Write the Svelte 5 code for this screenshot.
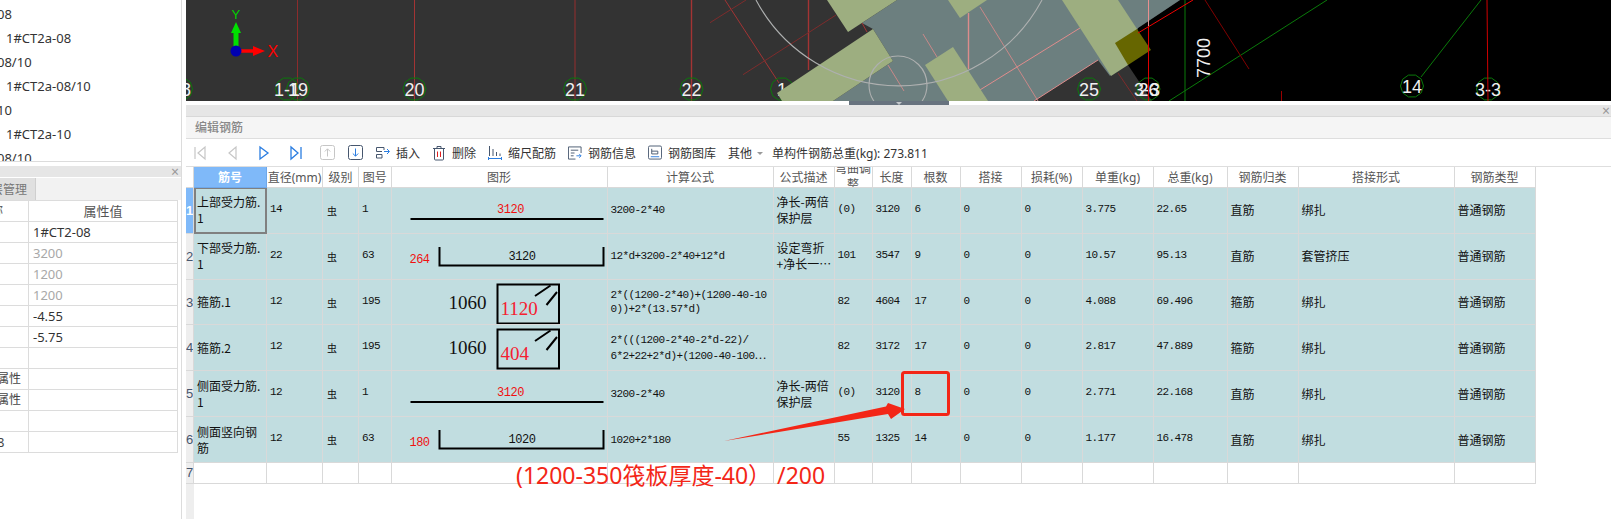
<script>
  const tree = [
    { t: '08', cls: 'lv0' },
    { t: '1#CT2a-08', cls: 'lv1' },
    { t: '08/10', cls: 'lv0' },
    { t: '1#CT2a-08/10', cls: 'lv1' },
    { t: '10', cls: 'lv0' },
    { t: '1#CT2a-10', cls: 'lv1' },
    { t: '08/10', cls: 'lv0' }
  ];

  const props = [
    ['', '1#CT2-08', ''],
    ['', '3200', 'grey'],
    ['', '1200', 'grey'],
    ['', '1200', 'grey'],
    ['', '-4.55', ''],
    ['', '-5.75', ''],
    ['', '', ''],
    ['属性', '', ''],
    ['属性', '', ''],
    ['', '', ''],
    ['8', '', '']
  ];

  const heads = ['筋号', '直径(mm)', '级别', '图号', '图形', '计算公式', '公式描述', '弯曲调整', '长度', '根数', '搭接', '损耗(%)', '单重(kg)', '总重(kg)', '钢筋归类', '搭接形式', '钢筋类型'];

  const rows = [
    { name: ['上部受力筋.', '1'], dia: 14, fig: 1, shape: 'line', a: '3120', formula: ['3200-2*40'], desc: ['净长-两倍', '保护层'], adj: '(0)', len: 3120, n: 6, unit: '3.775', total: '22.65', cat: '直筋', form: '绑扎' },
    { name: ['下部受力筋.', '1'], dia: 22, fig: 63, shape: 'hook', a: '264', b: '3120', formula: ['12*d+3200-2*40+12*d'], desc: ['设定弯折', '+净长一⋯'], adj: '101', len: 3547, n: 9, unit: '10.57', total: '95.13', cat: '直筋', form: '套管挤压' },
    { name: ['箍筋.1'], dia: 12, fig: 195, shape: 'stirrup', a: '1060', b: '1120', formula: ['2*((1200-2*40)+(1200-40-10', '0))+2*(13.57*d)'], desc: [], adj: '82', len: 4604, n: 17, unit: '4.088', total: '69.496', cat: '箍筋', form: '绑扎' },
    { name: ['箍筋.2'], dia: 12, fig: 195, shape: 'stirrup', a: '1060', b: '404', formula: ['2*(((1200-2*40-2*d-22)/', '6*2+22+2*d)+(1200-40-100⋯'], desc: [], adj: '82', len: 3172, n: 17, unit: '2.817', total: '47.889', cat: '箍筋', form: '绑扎' },
    { name: ['侧面受力筋.', '1'], dia: 12, fig: 1, shape: 'line', a: '3120', formula: ['3200-2*40'], desc: ['净长-两倍', '保护层'], adj: '(0)', len: 3120, n: 8, unit: '2.771', total: '22.168', cat: '直筋', form: '绑扎' },
    { name: ['侧面竖向钢', '筋'], dia: 12, fig: 63, shape: 'hook', a: '180', b: '1020', formula: ['1020+2*180'], desc: [], adj: '55', len: 1325, n: 14, unit: '1.177', total: '16.478', cat: '直筋', form: '绑扎' }
  ];

  // axis labels: text centre and the ring around it (ring may sit apart, some are hidden)
  const marks = [
    { t: '8', x: 186, y: 89, ring: 181 },
    { t: '1-1', x: 287, y: 89, ring: 287 },
    { t: '19', x: 298, y: 89, ring: 298 },
    { t: '20', x: 414.5, y: 89, ring: 414.5 },
    { t: '21', x: 575, y: 89, ring: 575 },
    { t: '22', x: 691.5, y: 89, ring: 691.5 },
    { t: '1', x: 782, y: 89, ring: 782 },
    { t: '25', x: 1089, y: 89, ring: 1089 },
    { t: '3-3', x: 1147, y: 89 },
    { t: '26', x: 1148.5, y: 89, ring: 1148.5 },
    { t: '14', x: 1412, y: 86, ring: 1412 },
    { t: '3-3', x: 1488, y: 89, ring: 1488 }
  ];

  function ring(cx, cy, r) {
    const pts = [];
    for (let i = 0; i < 10; i++) {
      const a = (Math.PI * 2 * i) / 10;
      pts.push((cx + r * Math.cos(a)).toFixed(1) + ',' + (cy + r * Math.sin(a)).toFixed(1));
    }
    return pts.join(' ');
  }
</script>

<div class="root">
  <aside class="left">
    <div class="tree">
      {#each tree as item}
        <div class="tree-row {item.cls}">{item.t}</div>
      {/each}
    </div>
    <div class="panel-bar">
      <span class="close">×</span>
    </div>
    <div class="tabs">
      <div class="tab"><span>楼层管理</span></div>
    </div>
    <div class="props">
      <div class="pcell phead pkey name-key"><span class="clip-end">名称</span></div>
      <div class="pcell phead pval">属性值</div>
      {#each props as p}
        <div class="pcell pkey"><span class="clip-end">{p[0]}</span></div>
        <div class="pcell pval-cell {p[2]}">{p[1]}</div>
      {/each}
    </div>
  </aside>

  <main class="right">
    <div class="canvas">
      <svg width="1425" height="101" viewBox="186 0 1425 101">
        <rect x="186" y="0" width="1425" height="101" fill="#333333" />
        <polygon points="1180,0 1611,0 1611,101 1152,101 1128,65 1138,28" fill="#000" />
        <polygon points="897,0 1180,0 1138,28 1110,76 1098,60 1034,101 833,101 893,61 873,29 862,23" fill="#6c7f7f" />

        <g stroke="#a33434" fill="none">
          <line x1="297.5" y1="0" x2="297.5" y2="101" stroke="#8c2c2c" />
          <line x1="414.5" y1="0" x2="414.5" y2="101" />
          <line x1="575" y1="0" x2="575" y2="101" stroke="#7a3030" stroke-width="1.4" />
          <line x1="691.5" y1="0" x2="691.5" y2="101" stroke-width="1.4" />
          <line x1="808.5" y1="0" x2="808.5" y2="70" stroke-width="1.4" />
          <line x1="725" y1="0" x2="779" y2="83" />
          <line x1="710" y1="22.7" x2="746" y2="0" stroke="#7e2c2c" />
          <line x1="743" y1="74.7" x2="836" y2="15" stroke="#7e2c2c" />
          <line x1="862" y1="23" x2="867" y2="32" />
          <line x1="1118" y1="73" x2="1137" y2="101" stroke="#7e2c2c" />
        </g>
        <g stroke="#c98888" fill="none">
          <line x1="888" y1="65" x2="904" y2="91" />
          <line x1="923" y1="34" x2="937" y2="57" />
          <line x1="968.5" y1="13" x2="968.5" y2="69" stroke="#dc8c8c" stroke-width="1.4" />
          <line x1="980" y1="7" x2="1038" y2="101" />
          <line x1="975" y1="93" x2="1080" y2="28" stroke="#e08c8c" />
          <line x1="1034" y1="101" x2="1098" y2="60" stroke="#e08c8c" />
          <line x1="1148.5" y1="0" x2="1148.5" y2="26" stroke="#e89090" />
        </g>

        {#each marks as m}
          {#if m.ring}
            <polygon points={ring(m.ring, m.y, 11.5)} fill="none" stroke="#0a7a0a" />
          {/if}
        {/each}
        {#each marks as m}
          <text x={m.x} y={m.y + 6.5} class="mark" text-anchor="middle">{m.t}</text>
        {/each}

        <polygon points="827,0 897,0 848,32" fill="#9dae80" />
        <polygon points="777,93 873,29 893,61 833,101 782,101" fill="#9dae80" />
        <polygon points="948,0 987,0 960,18" fill="#9dae80" />
        <polygon points="953,47 925,65 948,101 988,101" fill="#9dae80" />
        <polygon points="1062,0 1118,0 1137,29 1128,65 1111,76" fill="#9dae80" />
        <polygon points="1115,43 1137,29 1151,50 1128,65" fill="#666600" />

        <path d="M756 0 A162 162 0 0 0 1042 0" fill="none" stroke="#aeb0b0" stroke-width="1.1" />
        <circle cx="898" cy="85" r="29" fill="none" stroke="#aeb0b0" stroke-width="1.1" />

        <g fill="none">
          <line x1="1185" y1="0" x2="1185" y2="101" stroke="#0a7a0a" />
          <line x1="1327" y1="0" x2="1169" y2="101" stroke="#0a7a0a" />
          <line x1="1481" y1="0" x2="1421" y2="77" stroke="#0a7a0a" />
          <line x1="1205" y1="0" x2="1249" y2="69" stroke="#800000" />
          <line x1="1193" y1="0" x2="1138" y2="33" stroke="#f00000" />
          <line x1="1148.5" y1="26" x2="1148.5" y2="101" stroke="#e00000" />
          <line x1="1281.5" y1="91" x2="1281.5" y2="101" stroke="#990000" />
          <line x1="1487" y1="0" x2="1488" y2="101" stroke="#d00000" />
        </g>

        <text class="mark" transform="translate(1210 78) rotate(-90)">7700</text>

        <!-- coordinate gizmo -->
        <line x1="236" y1="47" x2="236" y2="30" stroke="#00e000" stroke-width="5" />
        <polygon points="236,22 231,33 241,33" fill="#00e000" />
        <line x1="236" y1="51" x2="255" y2="51" stroke="#ff0000" stroke-width="3.5" />
        <polygon points="265,51 253,46 253,56" fill="#ff0000" />
        <circle cx="236" cy="51" r="5.5" fill="#0000b0" />
        <text x="231.5" y="18.5" class="axis axis-y">Y</text>
        <text x="267.5" y="57" class="axis axis-x">X</text>
      </svg>
    </div>
    <div class="splitter"><span class="grip"><i></i></span></div>

    <div class="panel-bar wide">
      <span class="close">×</span>
    </div>
    <div class="title">编辑钢筋</div>

    <div class="toolbar">
      <div class="nav">
        <svg width="12" height="18" viewBox="0 0 12 18"><path d="M1 3v12M11 3v12L4 9z" fill="none" stroke="#c6c6c6" stroke-width="1.2" /></svg>
        <svg width="12" height="18" viewBox="0 0 12 18"><path d="M10 3v12L3 9z" fill="none" stroke="#c6c6c6" stroke-width="1.2" /></svg>
        <svg width="12" height="18" viewBox="0 0 12 18"><path d="M2 3v12l8-6z" fill="none" stroke="#2a7de1" stroke-width="1.3" /></svg>
        <svg width="12" height="18" viewBox="0 0 12 18"><path d="M1 3v12l7-6zM11 3v12" fill="none" stroke="#2a7de1" stroke-width="1.3" /></svg>
      </div>
      <div class="updown">
        <svg width="15" height="15" viewBox="0 0 15 15"><rect x=".5" y=".5" width="14" height="14" rx="2" fill="none" stroke="#c6c6c6" /><path d="M7.5 11.5V4M4.8 6.5l2.7-2.7 2.7 2.7" fill="none" stroke="#c6c6c6" /></svg>
        <svg width="15" height="15" viewBox="0 0 15 15"><rect x=".5" y=".5" width="14" height="14" rx="2" fill="none" stroke="#46566e" /><path d="M7.5 3.5V11M4.8 8.5l2.7 2.7 2.7-2.7" fill="none" stroke="#2a7de1" /></svg>
      </div>
      <div class="tools">
        <div class="tool">
          <svg width="14" height="16" viewBox="0 0 14 16"><path d="M8 5V2.5H.5v4H6M.5 9.5H6v3.5H.5z" fill="none" stroke="#46566e" /><path d="M8 6.5h5M11 4l2.5 2.5L11 9" fill="none" stroke="#2a7de1" /></svg>
          <span>插入</span>
        </div>
        <div class="tool">
          <svg width="14" height="16" viewBox="0 0 14 16"><path d="M1 3.5h12M5 3.5V1.5h4v2M2.5 3.5v10.5a1 1 0 0 0 1 1h7a1 1 0 0 0 1-1V3.5" fill="none" stroke="#46566e" /><path d="M5.5 6.5v5.5M8.5 6.5v5.5" stroke="#e02020" /></svg>
          <span>删除</span>
        </div>
        <div class="tool">
          <svg width="14" height="16" viewBox="0 0 14 16"><path d="M1.5 1v10M5 4v7M8.5 7v4M12 8.5V11" stroke="#46566e" fill="none" /><path d="M.5 13.5h13M.5 12v3M13.5 12v3" stroke="#2a7de1" fill="none" /></svg>
          <span>缩尺配筋</span>
        </div>
        <div class="tool">
          <svg width="14" height="16" viewBox="0 0 15 16"><path d="M14 8V1.5H.5v13H8" fill="none" stroke="#46566e" /><path d="M3 5h8M3 8h4M3 11h3" stroke="#46566e" /><path d="M9 11h5M12 9l2 2-2 2" fill="none" stroke="#2a7de1" /></svg>
          <span>钢筋信息</span>
        </div>
        <div class="tool">
          <svg width="14" height="16" viewBox="0 0 15 16"><rect x=".5" y=".5" width="14" height="14" rx="1.5" fill="none" stroke="#46566e" /><path d="M4 3.5V9h6.5V6H4" fill="none" stroke="#46566e" /><path d="M3 12h9" stroke="#2a7de1" /></svg>
          <span>钢筋图库</span>
        </div>
        <div class="tool other">
          <span>其他</span><i class="caret"></i>
        </div>
        <div class="tool sum"><span>单构件钢筋总重(kg): 273.811</span></div>
      </div>
    </div>

    <div class="table">
      <div class="grid">
        <div class="cell corner"></div>
        {#each heads as h, i}
          <div class="cell head" class:selected-head={i === 0} class:narrow={h === '弯曲调整'}>
            <span>{h}</span>
          </div>
        {/each}

        {#each rows as r, i}
          <div class="cell rowno" class:current={i === 0}>{i + 1}</div>
          <div class="cell cjk" class:selected={i === 0}>
            <div>{#each r.name as l}<div>{l}</div>{/each}</div>
          </div>
          <div class="cell num">{r.dia}</div>
          <div class="cell grade">虫</div>
          <div class="cell num">{r.fig}</div>
          <div class="cell shape">
            {#if r.shape === 'line'}
              <svg width="215" height="45">
                <text x="118.5" y="25" class="dim red" text-anchor="middle">{r.a}</text>
                <line x1="18.5" y1="31" x2="211.5" y2="31" stroke="#000" stroke-width="2" />
              </svg>
            {:else if r.shape === 'hook'}
              <svg width="215" height="45">
                <text x="27.5" y="29" class="dim red" text-anchor="middle">{r.a}</text>
                <text x="130" y="26" class="dim" text-anchor="middle">{r.b}</text>
                <path d="M47.5 13V31.5H211.5V13" fill="none" stroke="#000" stroke-width="2" />
              </svg>
            {:else}
              <svg width="215" height="45">
                <text x="56.5" y="29" class="big">{r.a}</text>
                <rect x="105.5" y="4.5" width="61.5" height="39" fill="none" stroke="#000" stroke-width="2" />
                <path d="M143 16L158.5 5.5M154.5 25L165 12" fill="none" stroke="#000" stroke-width="2" />
                <text x="108.5" y="35" class="big red2">{r.b}</text>
              </svg>
            {/if}
          </div>
          <div class="cell num formula">
            <div>
              {#each r.formula as l}
                <div>{l.replace('⋯', '')}{#if l.endsWith('⋯')}<span class="dots">⋯</span>{/if}</div>
              {/each}
            </div>
          </div>
          <div class="cell cjk">
            <div>{#each r.desc as l}<div>{l}</div>{/each}</div>
          </div>
          <div class="cell num">{r.adj}</div>
          <div class="cell num">{r.len}</div>
          <div class="cell num">{r.n}</div>
          <div class="cell num">0</div>
          <div class="cell num">0</div>
          <div class="cell num">{r.unit}</div>
          <div class="cell num">{r.total}</div>
          <div class="cell cjk">{r.cat}</div>
          <div class="cell cjk">{r.form}</div>
          <div class="cell cjk">普通钢筋</div>
        {/each}

        <div class="cell rowno blank">7</div>
        {#each heads as h}
          <div class="cell blank"></div>
        {/each}
      </div>
      <div class="strip"></div>
    </div>
  </main>

  <!-- red markup drawn over the screenshot -->
  <svg class="markup" width="1611" height="519">
    <rect x="902.5" y="372.5" width="46" height="42" rx="2" fill="none" stroke="#f32617" stroke-width="3" />
    <polygon points="724,441 886,406.5 888,403 905,409 891,419 888,414" fill="#f32617" />
  </svg>
  <div class="note">(1200-350筏板厚度-40）&nbsp;/200</div>
</div>

<style>
  :global(body) {
    margin: 0;
    background: #fff;
  }
  .root {
    position: relative;
    display: flex;
    width: 1611px;
    height: 519px;
    overflow: hidden;
    font-family: "Noto Sans", "Noto Sans CJK SC", sans-serif;
    color: #333;
    background: #fff;
  }

  /* left side */
  .left {
    flex: 0 0 181px;
    border-right: 1px solid #dcdcdc;
    display: flex;
    flex-direction: column;
    margin-right: 4px;
    overflow: hidden;
  }
  .tree {
    height: 159px;
    padding-top: 2px;
    border-bottom: 1px solid #dcdcdc;
    margin-bottom: 4px;
    overflow: hidden;
  }
  .tree-row {
    height: 24px;
    line-height: 24px;
    font-size: 13px;
    white-space: nowrap;
  }
  .lv0 {
    text-indent: -3px;
  }
  .lv1 {
    padding-left: 6px;
  }
  .panel-bar {
    position: relative;
    height: 11px;
    background: #e6e6e6;
    flex: 0 0 auto;
  }
  .panel-bar.wide {
    height: 11px;
    border-bottom: 1px solid #d8d8d8;
  }
  .close {
    position: absolute;
    right: 1px;
    top: -2px;
    font-size: 14px;
    line-height: 16px;
    color: #999;
  }
  .left .close {
    right: 2px;
  }
  .tabs {
    margin-top: 1px;
    height: 22px;
    background: #f2f2f2;
    flex: 0 0 auto;
  }
  .tab {
    width: 36px;
    height: 22px;
    padding-right: 8px;
    background: #e0e0e0;
    border-right: 1px solid #cfcfcf;
    box-sizing: border-box;
    overflow: hidden;
    display: flex;
    justify-content: flex-end;
    align-items: center;
    font-size: 12px;
    color: #777;
    white-space: nowrap;
  }
  .props {
    display: grid;
    grid-template-columns: 29px 149px;
    grid-auto-rows: 21px;
    width: 178px;
    border-top: 1px solid #dcdcdc;
    box-sizing: border-box;
  }
  .pcell {
    border-right: 1px solid #dcdcdc;
    border-bottom: 1px solid #dcdcdc;
    box-sizing: border-box;
    font-size: 13px;
    line-height: 20px;
    overflow: hidden;
    white-space: nowrap;
  }
  .pkey {
    display: flex;
    justify-content: flex-end;
    padding-right: 7px;
    color: #444;
  }
  .name-key {
    padding-right: 25px;
  }
  .clip-end {
    font-size: 12px;
    flex: 0 0 auto;
  }
  .pcell:nth-last-child(2) {
    justify-content: flex-start;
    padding-left: 0;
  }
  .pcell:nth-last-child(2) .clip-end {
    font-size: 13px;
    margin-left: -3px;
  }
  .phead {
    font-size: 13px;
    color: #555;
  }
  .pval {
    text-align: center;
  }
  .pval-cell {
    padding-left: 4px;
  }
  .grey {
    color: #a8a8a8;
  }

  /* right side */
  .right {
    flex: 1 1 auto;
    min-width: 0;
    display: flex;
    flex-direction: column;
  }
  .canvas {
    height: 101px;
    flex: 0 0 auto;
  }
  .canvas svg {
    display: block;
  }
  .mark {
    font-family: "Liberation Sans", sans-serif;
    font-size: 18px;
    fill: #f0f0f0;
  }
  .axis {
    font-family: "Liberation Sans", sans-serif;
  }
  .axis-y {
    font-size: 13px;
    fill: #00d000;
  }
  .axis-x {
    font-size: 16px;
    fill: #ff0000;
  }
  .splitter {
    height: 4px;
    flex: 0 0 auto;
    position: relative;
  }
  .grip {
    position: absolute;
    left: 663px;
    top: 0;
    width: 100px;
    height: 4px;
    background: #68737f;
    display: flex;
    justify-content: center;
  }
  .grip i {
    width: 0;
    height: 0;
    margin-top: 1px;
    border-left: 3px solid transparent;
    border-right: 3px solid transparent;
    border-top: 3px solid #c4c8cc;
  }
  .title {
    height: 21px;
    line-height: 21px;
    flex: 0 0 auto;
    background: #f5f5f5;
    border-bottom: 1px solid #dedede;
    padding-left: 9px;
    font-size: 12px;
    font-weight: 500;
    color: #888;
  }
  .toolbar {
    height: 27px;
    flex: 0 0 auto;
    display: flex;
    align-items: center;
    padding-left: 8px;
    border-bottom: 1px solid #dedede;
    font-size: 12px;
  }
  .nav {
    display: flex;
    gap: 20px;
    align-items: center;
  }
  .updown {
    display: flex;
    gap: 13px;
    margin-left: 18px;
    align-items: center;
  }
  .tools {
    display: flex;
    gap: 12px;
    margin-left: 13px;
    align-items: center;
  }
  .tool {
    display: flex;
    align-items: center;
    gap: 6px;
    white-space: nowrap;
  }
  .tool svg {
    display: block;
  }
  .other {
    gap: 5px;
  }
  .sum {
    margin-left: -3px;
  }
  .caret {
    width: 0;
    height: 0;
    border-left: 3px solid transparent;
    border-right: 3px solid transparent;
    border-top: 3px solid #999;
    margin-top: 2px;
  }

  .table {
    flex: 1 1 auto;
    display: flex;
    flex-direction: column;
    min-height: 0;
  }
  .grid {
    display: grid;
    grid-template-columns: 8px 73px 56px 36px 32.5px 216px 166px 61px 38px 39px 49px 61px 61px 71px 74px 71px 156px 81px;
    grid-template-rows: 21px repeat(6, 45.84px) 21px;
    flex: 0 0 auto;
  }
  .strip {
    flex: 1 1 auto;
    width: 8px;
    background: #eee;
  }
  .cell {
    box-sizing: border-box;
    border-right: 1px solid #d9d9d9;
    border-bottom: 1px solid #d9d9d9;
    background: #c1dde0;
    display: flex;
    align-items: center;
    padding: 0 3px;
    overflow: hidden;
    color: #111;
    white-space: nowrap;
  }
  .head {
    background: #fff;
    justify-content: center;
    padding: 0;
    font-size: 12px;
    color: #555;
  }
  .selected-head {
    background: #7fb9f9;
    color: #fff;
    font-weight: 700;
    border-color: #6ea8ea;
  }
  .narrow span {
    width: 36px;
    white-space: normal;
    text-align: center;
    line-height: 16px;
  }
  .corner {
    background: #fff;
    padding: 0;
  }
  .rowno {
    background: #eee;
    padding: 0;
    justify-content: center;
    font: 13px "Liberation Sans", sans-serif;
    color: #46566e;
  }
  .rowno.current {
    background: #7fb9f9;
    color: #fff;
    font-weight: 700;
  }
  .blank {
    background: #fff;
  }
  .rowno.blank {
    background: #eee;
  }
  .cjk {
    font-size: 12px;
    line-height: 16px;
    font-family: "Noto Sans CJK SC", sans-serif;
  }
  .selected {
    border: 2px solid #808080;
    border-top: 1px solid #808080;
    padding-left: 1px;
  }
  .num {
    font-family: "Liberation Mono", monospace;
    font-size: 11px;
    letter-spacing: -0.6px;
    line-height: 14px;
    padding-bottom: 3px;
  }
  .formula {
    padding-bottom: 0;
    font-size: 11px;
  }
  .dots {
    font-family: "Noto Sans CJK SC", sans-serif;
    letter-spacing: 0;
  }
  .grade {
    font-family: "Noto Sans CJK SC", sans-serif;
    font-size: 10px;
    padding-left: 4px;
  }
  .shape {
    padding: 0;
    background: #c1dde0;
  }
  .shape svg {
    display: block;
  }
  .dim {
    font-family: "Liberation Mono", monospace;
    font-size: 12px;
    letter-spacing: -0.5px;
    fill: #111;
  }
  .red {
    fill: #f01010;
  }
  .big {
    font-family: "Liberation Serif", serif;
    font-size: 19px;
    fill: #111;
  }
  .red2 {
    fill: #f52030;
  }

  .markup {
    position: absolute;
    left: 0;
    top: 0;
    pointer-events: none;
  }
  .note {
    position: absolute;
    left: 516px;
    top: 459px;
    font-size: 23px;
    line-height: 32px;
    color: #f32617;
    white-space: nowrap;
    font-family: "Noto Sans", "Noto Sans CJK SC", sans-serif;
  }
</style>
